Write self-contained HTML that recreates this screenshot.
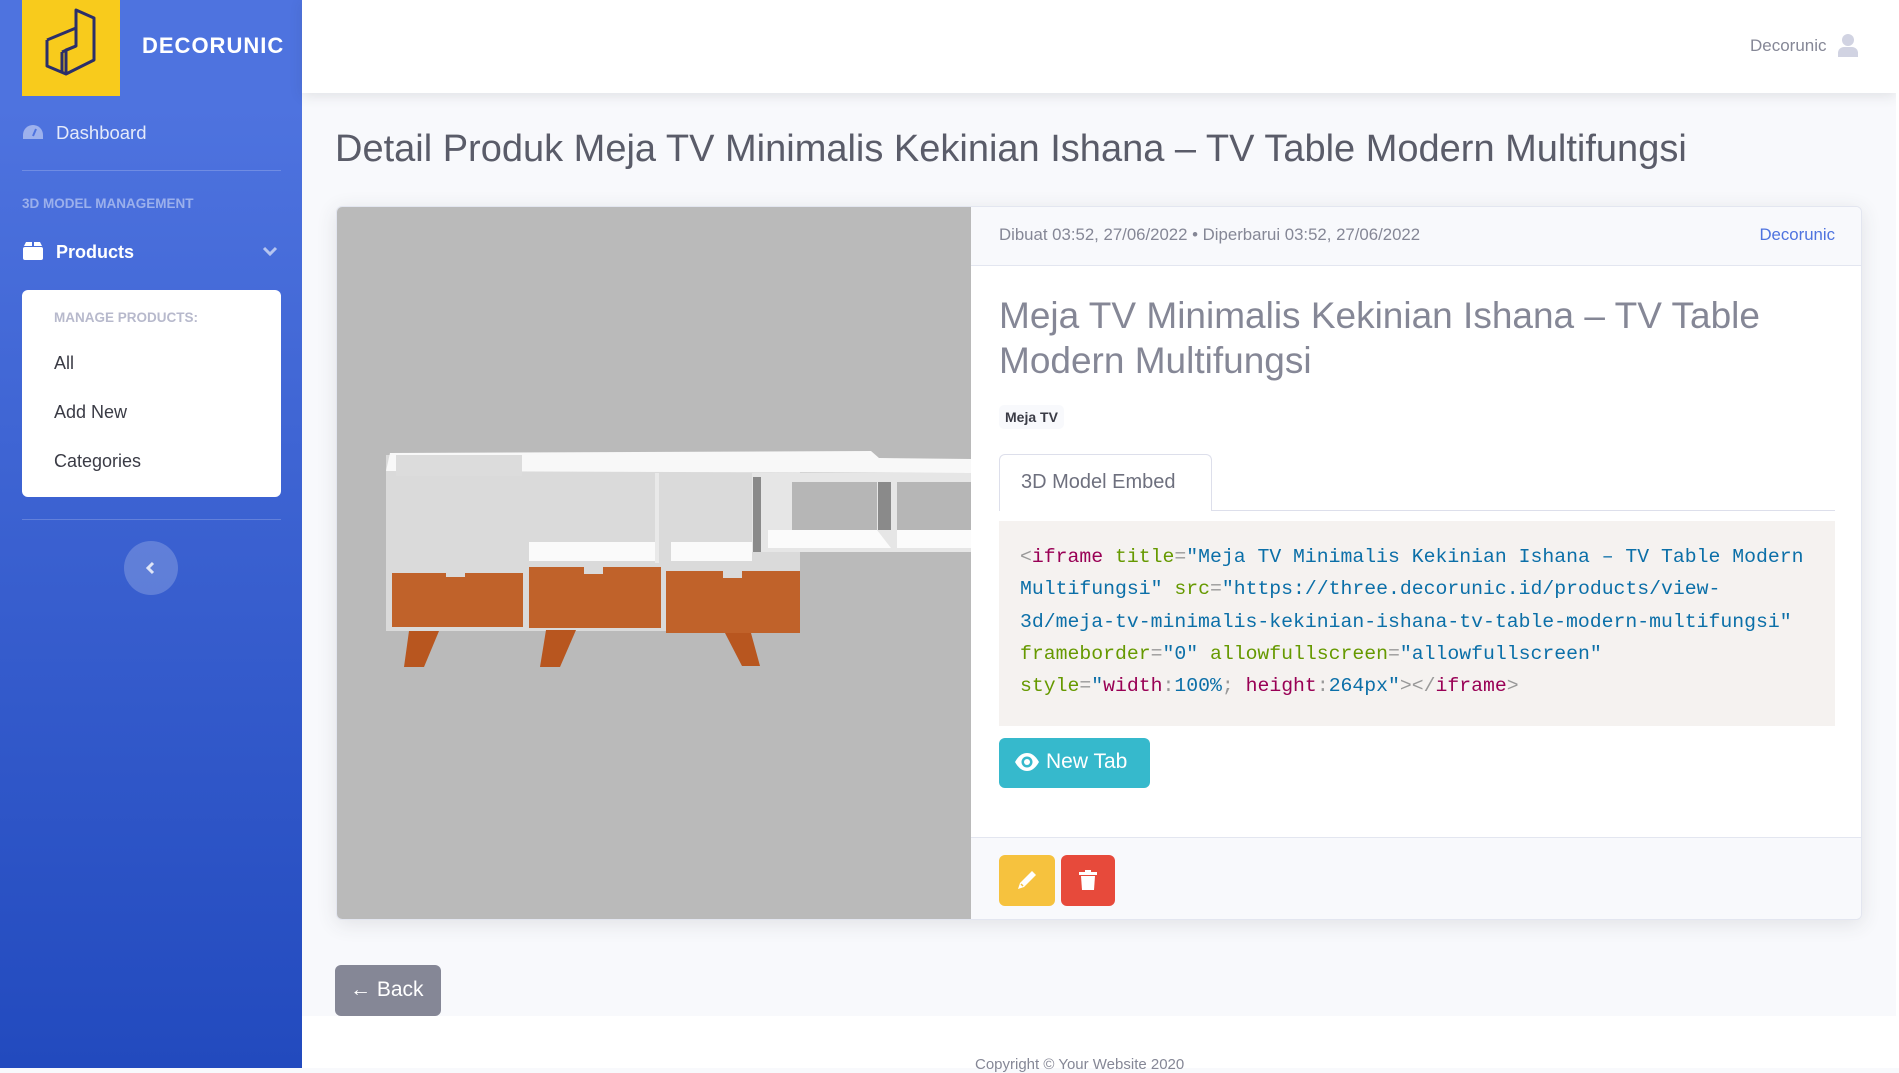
<!DOCTYPE html>
<html><head><meta charset="utf-8"><style>
*{box-sizing:border-box;margin:0;padding:0}
body{width:1899px;height:1068px;overflow:hidden;font-family:"Liberation Sans",sans-serif;background:#f8f9fc;position:relative}
.sb{position:absolute;left:0;top:0;width:302px;height:1068px;background:linear-gradient(180deg,#4e73df 10%,#224abe 100%)}
.abs{position:absolute}
.top{position:absolute;left:302px;top:0;width:1594px;height:93px;background:#fff;box-shadow:0 3px 12px rgba(58,59,69,.12)}
.card{position:absolute;left:336px;top:206px;width:1526px;height:714px;background:#fff;border:1px solid #e3e6f0;border-radius:6px;box-shadow:0 4px 20px rgba(58,59,69,.12);overflow:hidden}
.code{font-family:"Liberation Mono",monospace;font-size:19.8px;line-height:32.3px;color:#2f6f9f;white-space:nowrap}
.t{color:#990055}.a{color:#669900}.p{color:#999}.v{color:#0b6fa8}
</style></head><body>
<div class="sb">
 <div class="abs" style="left:22px;top:0;width:98px;height:96px;background:#f8cb1c">
  <svg width="98" height="96" viewBox="0 0 98 96"><g fill="none" stroke="#2b2f6a" stroke-width="3" stroke-linejoin="round">
   <path d="M25 40 L25 66 L44 74 L72 60 L72 18 L54 10 L54 46 L44 50 L44 74"/><path d="M25 40 L54 28"/><path d="M40 52 L40 72"/><path d="M40 52 L54 46"/></g></svg>
 </div>
 <div class="abs" style="left:142px;top:33px;color:#fff;font-weight:bold;font-size:22px;letter-spacing:1px">DECORUNIC</div>
 <svg class="abs" style="left:22px;top:124px" width="22" height="16" viewBox="0 0 22 16"><path d="M11 1A10 10 0 0 0 1 11v4h20v-4A10 10 0 0 0 11 1z" fill="rgba(255,255,255,.45)"/><path d="M11 12L14 5" stroke="#4e73df" stroke-width="2"/></svg>
 <div class="abs" style="left:56px;top:122px;color:rgba(255,255,255,.85);font-size:18.5px">Dashboard</div>
 <div class="abs" style="left:22px;top:170px;width:259px;height:1px;background:rgba(255,255,255,.2)"></div>
 <div class="abs" style="left:22px;top:196px;color:rgba(255,255,255,.45);font-size:13.5px;font-weight:bold">3D MODEL MANAGEMENT</div>
 <svg class="abs" style="left:23px;top:242px" width="20" height="18" viewBox="0 0 20 18"><rect x="0" y="5" width="20" height="13" rx="2" fill="#fff"/><path d="M1 4L3 0h6v4zM11 4V0h6l2 4z" fill="#fff"/></svg>
 <div class="abs" style="left:56px;top:242px;color:#fff;font-size:18px;font-weight:bold">Products</div>
 <svg class="abs" style="left:262px;top:245px" width="16" height="12" viewBox="0 0 16 12"><path d="M2 3l6 6 6-6" stroke="rgba(255,255,255,.6)" stroke-width="3" fill="none"/></svg>
 <div class="abs" style="left:22px;top:290px;width:259px;height:207px;background:#fff;border-radius:6px">
  <div class="abs" style="left:32px;top:20px;font-size:13.5px;font-weight:bold;color:#b7b9cc">MANAGE PRODUCTS:</div>
  <div class="abs" style="left:32px;top:63px;font-size:18px;color:#3a3b45">All</div>
  <div class="abs" style="left:32px;top:112px;font-size:18px;color:#3a3b45">Add New</div>
  <div class="abs" style="left:32px;top:161px;font-size:18px;color:#3a3b45">Categories</div>
 </div>
 <div class="abs" style="left:22px;top:519px;width:259px;height:1px;background:rgba(255,255,255,.2)"></div>
 <div class="abs" style="left:124px;top:541px;width:54px;height:54px;border-radius:50%;background:rgba(255,255,255,.2)"></div>
 <svg class="abs" style="left:145px;top:561px" width="12" height="14" viewBox="0 0 12 14"><path d="M8 2L3 7l5 5" stroke="rgba(255,255,255,.8)" stroke-width="3" fill="none"/></svg>
</div>
<div class="top">
 <div class="abs" style="left:1448px;top:36px;font-size:17px;color:#858796">Decorunic</div>
 <svg class="abs" style="left:1536px;top:34px" width="20" height="23" viewBox="0 0 20 23"><circle cx="10" cy="6" r="6" fill="#d1d3e2"/><path d="M0 23v-4a6 6 0 0 1 6-6h8a6 6 0 0 1 6 6v4z" fill="#d1d3e2"/></svg>
</div>
<div class="abs" style="left:335px;top:128px;font-size:38px;color:#5a5c69">Detail Produk Meja TV Minimalis Kekinian Ishana – TV Table Modern Multifungsi</div>
<div class="card">
 <svg class="abs" style="left:0;top:0" width="634" height="714" viewBox="336 206 634 714">
  <rect x="336" y="206" width="634" height="714" fill="#bababa"/>
  <rect x="385" y="454" width="414" height="176" fill="#dadada"/>
  <path d="M389 452L870 450L878 457L970 458L970 472L385 470z" fill="#f8f8f8"/>
  <rect x="395" y="454" width="126" height="21" fill="#dcdcdc"/>
  <rect x="528" y="541" width="126" height="19" fill="#fafafa"/>
  <rect x="670" y="541" width="81" height="19" fill="#fafafa"/>
  <rect x="654" y="472" width="4" height="90" fill="#e9e9e9"/>
  <rect x="751" y="472" width="219" height="79" fill="#e6e6e6"/>
  <rect x="752" y="476" width="8" height="75" fill="#8a8a8a"/>
  <rect x="791" y="481" width="85" height="48" fill="#b6b6b6"/>
  <rect x="877" y="481" width="13" height="48" fill="#8a8a8a"/>
  <rect x="896" y="481" width="74" height="48" fill="#b6b6b6"/>
  <path d="M767 529L876 529L890 547L767 547z" fill="#fbfbfb"/>
  <rect x="896" y="529" width="74" height="18" fill="#fbfbfb"/>
  <rect x="391" y="572" width="131" height="54" fill="#c0622a"/>
  <rect x="528" y="566" width="132" height="61" fill="#c0622a"/>
  <rect x="665" y="570" width="134" height="62" fill="#c0622a"/>
  <rect x="445" y="572" width="19" height="4" fill="#dadada"/>
  <rect x="583" y="566" width="19" height="7" fill="#dadada"/>
  <rect x="722" y="570" width="19" height="7" fill="#dadada"/>
  <path d="M408 630L438 630L423 666L403 666z" fill="#b8561f"/>
  <path d="M545 629L575 629L559 666L539 666z" fill="#b8561f"/>
  <path d="M724 632L750 632L759 665L741 665z" fill="#b8561f"/>
 </svg>
 <div class="abs" style="left:634px;top:0;width:892px;height:59px;background:#f8f9fc;border-bottom:1px solid #e3e6f0"></div>
 <div class="abs" style="left:662px;top:18px;font-size:16.8px;color:#858796">Dibuat 03:52, 27/06/2022 • Diperbarui 03:52, 27/06/2022</div>
 <div class="abs" style="right:26px;top:18px;font-size:16.8px;color:#4e73df">Decorunic</div>
 <div class="abs" style="left:662px;top:86px;width:820px;font-size:37px;line-height:45px;color:#858796">Meja TV Minimalis Kekinian Ishana – TV Table Modern Multifungsi</div>
 <div class="abs" style="left:662px;top:198px;padding:4px 6px;font-size:14px;font-weight:bold;color:#3a3b45;background:#f8f9fc;border-radius:5px">Meja TV</div>
 <div class="abs" style="left:662px;top:303px;width:836px;height:1px;background:#dddfeb"></div>
 <div class="abs" style="left:662px;top:247px;width:213px;height:57px;background:#fff;border:1px solid #dddfeb;border-bottom:none;border-radius:6px 6px 0 0;font-size:20px;color:#6e707e;padding:16px 0 0 21px">3D Model Embed</div>
 <div class="abs code" style="left:662px;top:314px;width:836px;height:205px;background:#f5f2f0;padding:20px 21px">
  <span class="p">&lt;</span><span class="t">iframe</span> <span class="a">title</span><span class="p">=</span><span class="v">"Meja TV Minimalis Kekinian Ishana – TV Table Modern<br>Multifungsi"</span> <span class="a">src</span><span class="p">=</span><span class="v">"https://three.decorunic.id/products/view-<br>3d/meja-tv-minimalis-kekinian-ishana-tv-table-modern-multifungsi"</span><br><span class="a">frameborder</span><span class="p">=</span><span class="v">"0"</span> <span class="a">allowfullscreen</span><span class="p">=</span><span class="v">"allowfullscreen"</span><br><span class="a">style</span><span class="p">=</span><span class="v">"<span class="t">width</span><span class="p">:</span>100%<span class="p">;</span> <span class="t">height</span><span class="p">:</span>264px"</span><span class="p">&gt;&lt;/</span><span class="t">iframe</span><span class="p">&gt;</span>
 </div>
 <div class="abs" style="left:662px;top:531px;width:151px;height:50px;background:#36b9cc;border-radius:6px;color:#fff;font-size:21px;padding:12px 0 0 47px">New Tab</div>
 <svg class="abs" style="left:677px;top:546px" width="26" height="18" viewBox="0 0 26 18"><path d="M1 9C5 2 9 0 13 0s8 2 12 9c-4 7-8 9-12 9S5 16 1 9z" fill="#fff"/><circle cx="13" cy="9" r="5.5" fill="#36b9cc"/><circle cx="13" cy="9" r="3" fill="#fff"/></svg>
 <div class="abs" style="left:634px;top:630px;width:892px;height:84px;background:#f8f9fc;border-top:1px solid #e3e6f0"></div>
 <div class="abs" style="left:662px;top:648px;width:56px;height:51px;background:#f6c23e;border-radius:6px"></div>
 <svg class="abs" style="left:679px;top:662px" width="22" height="22" viewBox="0 0 22 22"><path d="M16 2l4 4L8 18l-6 2 2-6z" fill="#fff"/><path d="M5 15l2 2" stroke="#f6c23e" stroke-width="1.5"/></svg>
 <div class="abs" style="left:724px;top:648px;width:54px;height:51px;background:#e74a3b;border-radius:6px"></div>
 <svg class="abs" style="left:741px;top:662px" width="20" height="22" viewBox="0 0 20 22"><path d="M1 3h18v3H1zM7 1h6v2H7z" fill="#fff"/><path d="M3 7h14l-1 14H4z" fill="#fff"/></svg>
</div>
<div class="abs" style="left:335px;top:965px;width:106px;height:51px;background:#858796;border-radius:6px;color:#fff;font-size:21px;padding:13px 0 0 15px">← Back</div>
<div class="abs" style="left:302px;top:1016px;width:1594px;height:52px;background:#fff"></div>
<div class="abs" style="left:975px;top:1056px;font-size:15px;color:#858796">Copyright © Your Website 2020</div>
<div class="abs" style="left:1896px;top:0;width:3px;height:1068px;background:#fff"></div>
</body></html>
